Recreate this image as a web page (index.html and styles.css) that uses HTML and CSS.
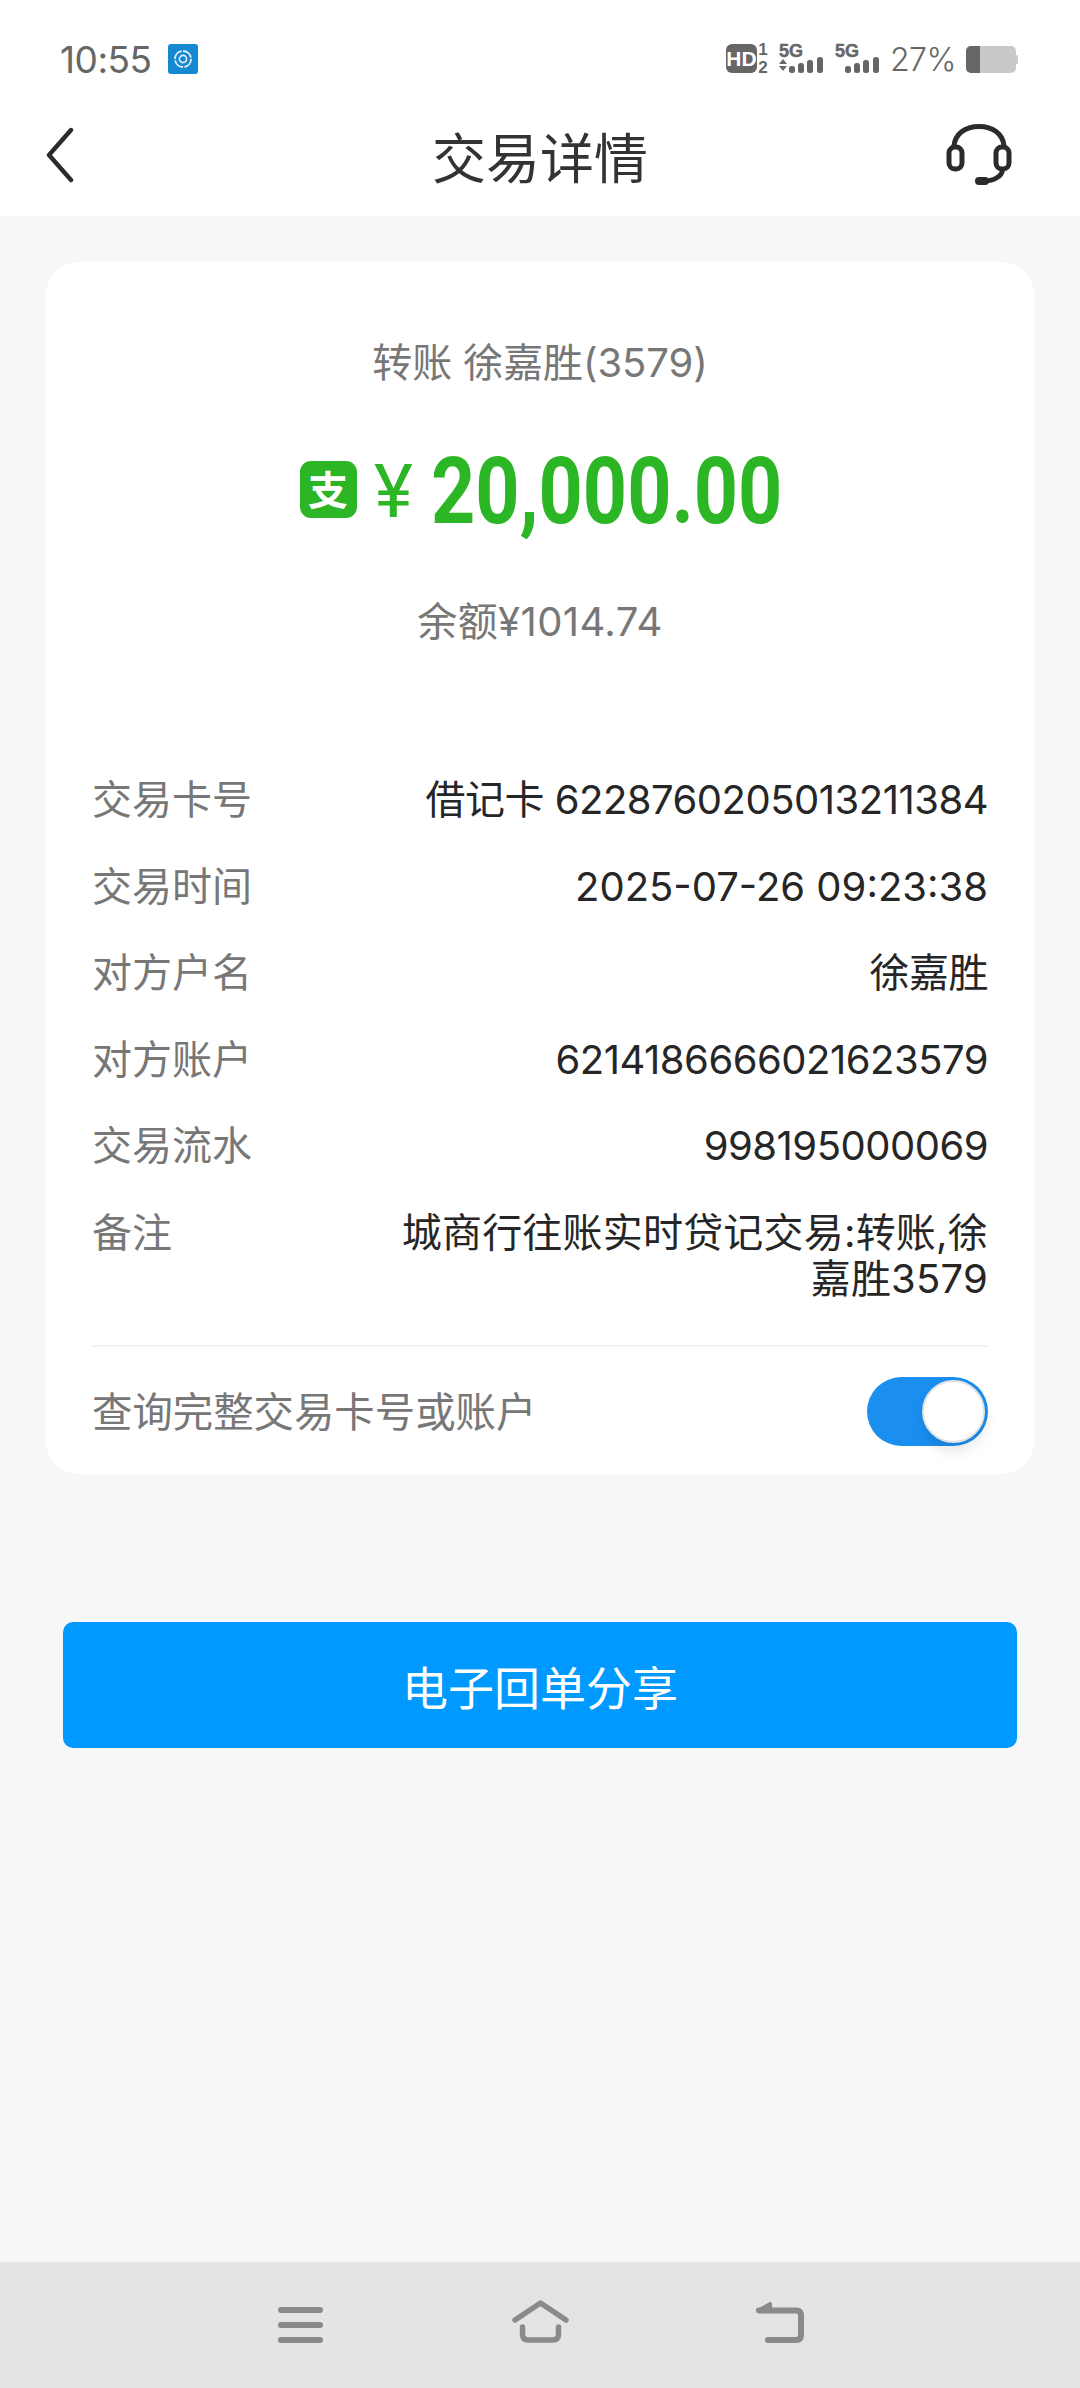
FILE: index.html
```html
<!DOCTYPE html>
<html lang="zh-CN">
<head>
<meta charset="utf-8">
<title>交易详情</title>
<link rel="stylesheet" href="styles.css">
</head>
<body>
<div class="app">
  <header class="top">
    <div class="status">
      <div class="status-left">
        <span class="clock">10:55</span>
        <svg class="app-badge" viewBox="0 0 30 30">
          <rect width="30" height="30" rx="3" fill="#1588d2"/>
          <circle cx="15" cy="15" r="8" fill="none" stroke="#e8f4fb" stroke-width="1.8" stroke-dasharray="11 1.5"/>
          <circle cx="15" cy="15" r="3.6" fill="none" stroke="#e8f4fb" stroke-width="1.6"/>
        </svg>
      </div>
      <div class="status-right">
        <svg class="hd" viewBox="0 -5 44 40">
          <rect width="31" height="29" rx="6" fill="#666"/>
          <text x="15.5" y="22" class="hd-label">HD</text>
          <text x="37" y="11" class="sim-num">1</text>
          <text x="37" y="29" class="sim-num">2</text>
        </svg>
        <svg class="signal" viewBox="0 -5 45 40">
          <text x="0" y="13" class="net">5G</text>
          <path d="M4 15l4 5H0zM0 22h8l-4 5z" fill="#666"/>
          <g fill="#666"><rect x="10" y="22" width="6" height="7" rx="2.5"/><rect x="19" y="19" width="6" height="10" rx="2.5"/><rect x="28" y="16" width="6" height="13" rx="2.5"/><rect x="38" y="13" width="6" height="16" rx="2.5"/></g>
        </svg>
        <svg class="signal second" viewBox="0 -5 45 40">
          <text x="0" y="13" class="net">5G</text>
          <g fill="#666"><rect x="10" y="22" width="6" height="7" rx="2.5"/><rect x="19" y="19" width="6" height="10" rx="2.5"/><rect x="28" y="16" width="6" height="13" rx="2.5"/><rect x="38" y="13" width="6" height="16" rx="2.5"/></g>
        </svg>
        <span class="percent">27%</span>
        <svg class="battery" viewBox="0 0 52 27">
          <rect x="0" y="0" width="50" height="27" rx="5" fill="#c9c9c9"/>
          <path d="M5 0h9v27H5a5 5 0 0 1-5-5V5a5 5 0 0 1 5-5z" fill="#666"/>
          <rect x="49" y="9" width="3" height="9" rx="1.5" fill="#c9c9c9"/>
        </svg>
      </div>
    </div>
    <nav class="titlebar">
      <svg class="back" viewBox="0 0 30 56"><path d="M26 3L4 28l22 25" fill="none" stroke="#2b2b2b" stroke-width="4.4" stroke-linecap="round" stroke-linejoin="round"/></svg>
      <h1 class="title">交易详情</h1>
      <svg class="headset" viewBox="0 0 66 62">
        <g fill="none" stroke="#2b2b2b" stroke-width="5" stroke-linecap="round">
          <path d="M8 22C9 10 19 2.5 33 2.5S57 10 58 22"/>
          <rect x="3" y="23" width="13" height="22" rx="6"/>
          <rect x="50" y="23" width="13" height="22" rx="6"/>
          <path d="M56.500 46c-1 7-8 10.500-20 11.500"/>
        </g>
        <rect x="29" y="53" width="14" height="8" rx="4" fill="#2b2b2b"/>
      </svg>
    </nav>
  </header>

  <main class="content">
    <section class="card">
      <div class="summary">
        <p class="party">转账 徐嘉胜(3579)</p>
        <div class="amount">
          <span class="pay-badge">支</span>
          <span class="currency">¥</span>
          <span class="figure"><span class="figure-text">20,000.00</span></span>
        </div>
        <p class="balance">余额¥1014.74</p>
      </div>
      <dl class="details">
        <div class="row"><dt>交易卡号</dt><dd>借记卡 6228760205013211384</dd></div>
        <div class="row"><dt>交易时间</dt><dd class="stamp">2025-07-26 09:23:38</dd></div>
        <div class="row"><dt>对方户名</dt><dd>徐嘉胜</dd></div>
        <div class="row"><dt>对方账户</dt><dd>6214186666021623579</dd></div>
        <div class="row"><dt>交易流水</dt><dd>998195000069</dd></div>
        <div class="row"><dt>备注</dt><dd class="note">城商行往账实时贷记交易:转账,徐嘉胜3579</dd></div>
      </dl>
      <div class="reveal">
        <span>查询完整交易卡号或账户</span>
        <span class="switch"><span class="knob"></span></span>
      </div>
    </section>
    <button class="share" type="button">电子回单分享</button>
  </main>

  <footer class="sysnav">
    <svg class="menu-icon" viewBox="0 0 45 36"><path d="M3 3h39M3 18h39M3 33h39" fill="none" stroke="#8b8a89" stroke-width="6" stroke-linecap="round"/></svg>
    <svg class="home-icon" viewBox="0 0 57 43"><g fill="none" stroke="#8b8a89" stroke-width="5.500" stroke-linecap="round" stroke-linejoin="round"><path d="M3 20L28.500 3 54 20"/><path d="M10.500 27v7q0 6 6 6h24q6 0 6-6v-7"/></g></svg>
    <svg class="return-icon" viewBox="0 0 48 42"><path d="M3 9.500H40q5 0 5 5V34q0 5-5 5H12" fill="none" stroke="#8b8a89" stroke-width="6" stroke-linecap="round" stroke-linejoin="round"/><path d="M2 9L14.500 2 15.500 9z" fill="#8b8a89" stroke="#8b8a89" stroke-width="2.500" stroke-linejoin="round"/></svg>
  </footer>
</div>
</body>
</html>
```
FILE: styles.css
```css
* { box-sizing: border-box; }

html, body { margin: 0; padding: 0; }

body {
  background: #f7f7f7;
  font-family: Inter, "Noto Sans CJK SC", sans-serif;
}

.app {
  width: 1080px;
  height: 2388px;
  display: flex;
  flex-direction: column;
}

/* Status bar and title bar */
.top { background: #fff; height: 216px; }

.status {
  height: 90px;
  padding: 28px 62px 0 60px;
  display: flex;
  justify-content: space-between;
  align-items: center;
}

.status-left { display: flex; align-items: center; gap: 16px; }

.clock { font-size: 37px; color: #666; letter-spacing: -0.5px; }

.app-badge { width: 30px; height: 30px; }

.status-right { display: flex; align-items: center; }

.hd { width: 44px; height: 40px; }
.hd-label { font: 700 21px "Liberation Sans", sans-serif; fill: #fff; text-anchor: middle; }
.sim-num { font: 700 17px "Liberation Sans", sans-serif; fill: #666; text-anchor: middle; }

.signal { width: 45px; height: 40px; margin-left: 9px; }
.signal.second { margin-left: 11px; }
.net { font: 700 18px "Liberation Sans", sans-serif; fill: #666; stroke: #666; stroke-width: 0.4px; }

.percent { font-size: 32px; font-weight: 300; color: #666; margin-left: 10px; letter-spacing: -0.5px; }

.battery { width: 52px; height: 27px; margin-left: 10px; }

.titlebar {
  height: 126px;
  padding: 4px 68px 0;
  display: grid;
  grid-template-columns: 1fr auto 1fr;
  align-items: center;
}

.back { width: 30px; height: 56px; margin-left: -23px; }

.title {
  margin: 0;
  font-family: "Noto Sans CJK SC", sans-serif;
  font-size: 54px;
  font-weight: 400;
  color: #333;
}

.headset { width: 66px; height: 62px; justify-self: end; }

/* Transaction card */
.content { flex: 1; padding: 46px 46px 0; }

.card {
  height: 1212px;
  background: #fff;
  border-radius: 32px;
  padding: 0 46px;
}

.summary { height: 495px; padding-top: 70px; text-align: center; }

.party, .balance {
  margin: 0;
  font-size: 40px;
  line-height: 62px;
  color: #777;
}

.party { letter-spacing: -0.1px; }

.amount {
  margin-top: 52px;
  height: 92px;
  display: flex;
  align-items: center;
  justify-content: center;
}

.pay-badge {
  width: 57px;
  height: 57px;
  margin-top: -5px;
  border-radius: 11px;
  background: #2cb524;
  color: #fff;
  font-family: "Noto Sans CJK SC", sans-serif;
  font-size: 40px;
  font-weight: 700;
  line-height: 54px;
  text-align: center;
}

.currency {
  width: 74px;
  text-align: center;
  color: #2cb524;
  font-family: Roboto, sans-serif;
  font-size: 74px;
  font-weight: 400;
  line-height: 92px;
}

/* The wrapper holds the condensed width of the scaled figures */
.figure { width: 350px; height: 92px; flex: none; }

.figure-text {
  display: inline-block;
  color: #2cb524;
  font-family: Roboto, sans-serif;
  font-size: 93px;
  font-weight: 700;
  line-height: 92px;
  white-space: nowrap;
  transform: scaleX(0.83);
  transform-origin: left center;
}

.balance { margin-top: 53px; letter-spacing: 0.4px; }

.details { margin: 0; }

.row {
  display: flex;
  justify-content: space-between;
  gap: 80px;
  min-height: 86.6px;
  font-size: 40px;
  line-height: 46px;
  padding-top: 20px;
}

.row dt { color: #777; flex: none; }

.row dd { margin: 0; color: #262626; text-align: right; letter-spacing: -0.5px; }

.row .stamp { letter-spacing: 0; }

.row .note { width: 590px; letter-spacing: 0.2px; }

.reveal {
  margin-top: 43px;
  border-top: 2px solid #f3f3f3;
  height: 128px;
  display: flex;
  align-items: center;
  justify-content: space-between;
  font-size: 40.4px;
  color: #777;
}

.switch {
  position: relative;
  width: 121px;
  height: 69px;
  margin-top: 3px;
  border-radius: 35px;
  background: #1a8ff0;
}

.knob {
  position: absolute;
  top: 3px;
  right: 3px;
  width: 63px;
  height: 63px;
  border-radius: 50%;
  background: #fff;
  border: 2px solid #e2e2e2;
  box-shadow: 0 8px 14px rgba(0, 0, 0, 0.1);
}

/* Share action */
.share {
  display: block;
  width: 954px;
  height: 126px;
  margin: 148px 0 0 17px;
  border: 0;
  border-radius: 10px;
  background: #0099ff;
  color: #fff;
  font-family: "Noto Sans CJK SC", sans-serif;
  font-size: 46px;
}

/* System navigation */
.sysnav {
  height: 126px;
  background: #e6e4e3;
  display: grid;
  grid-template-columns: repeat(3, 240px);
  justify-content: center;
  justify-items: center;
  align-items: end;
  padding-bottom: 45px;
}

.menu-icon { width: 45px; height: 36px; display: block; }
.home-icon { width: 57px; height: 43px; display: block; }
.return-icon { width: 48px; height: 42px; display: block; }
```
